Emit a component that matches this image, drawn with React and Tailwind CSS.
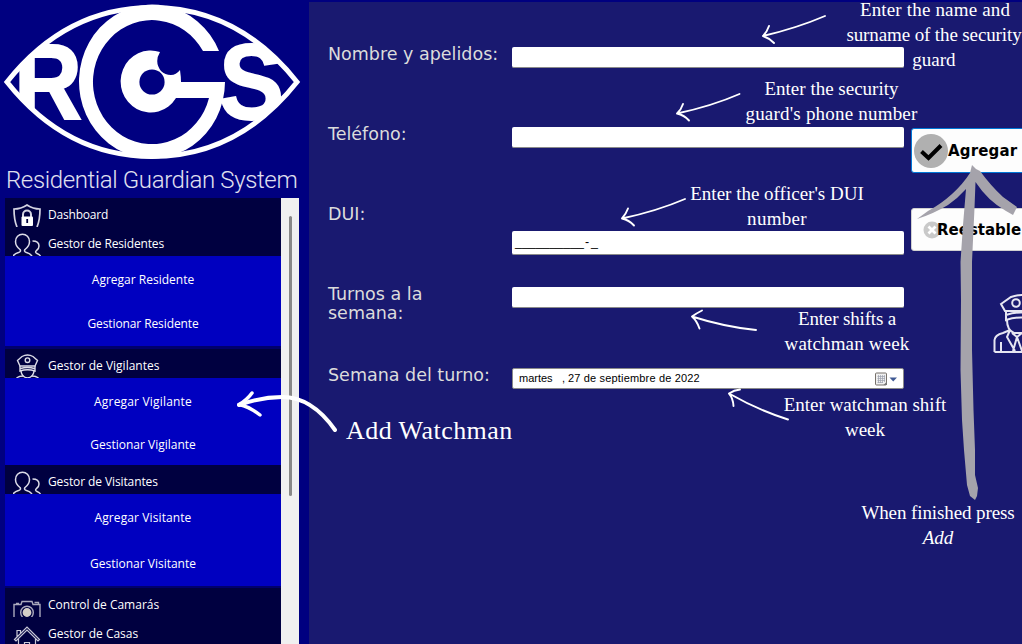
import React from 'react';

function Logo() {
  return (
    <svg className="block h-[164px] w-[308px] shrink-0" viewBox="0 0 308 164">
      <defs>
        <clipPath id="eye">
          <path d="M5 82C55 20 105 5 152 5S249 20 299 82C249 144 199 159 152 159S55 144 5 82Z" />
        </clipPath>
      </defs>
      <g clipPath="url(#eye)" stroke="#fff" strokeWidth="2" fill="#fff" fontWeight="700" fontFamily="Liberation Sans, sans-serif">
        <text x="14" y="118.500" fontSize="107" textLength="68" lengthAdjust="spacingAndGlyphs">R</text>
        <text x="219" y="119" fontSize="107" textLength="65" lengthAdjust="spacingAndGlyphs">S</text>
      </g>
      <path d="M7 82C51.500 26 103 7.500 152 7.500S252.500 26 297 82C252.500 138 201 156.500 152 156.500S51.500 138 7 82Z" fill="none" stroke="#fff" strokeWidth="5" />
      <path
        d="M219 51A73 77 0 1 0 225 82H181Q181 77 180 70Q176 75 171 75Q165 75 161 71Q154 62 160 52A30 31 0 1 0 176 98H209A59 62 0 1 1 203 51Z"
        fill="#fff"
      />
      <circle cx="152" cy="82" r="12.600" fill="#000080" />
    </svg>
  );
}

function ShieldIcon() {
  return (
    <svg className="w-7 h-[23px]" viewBox="0 0 28 23" fill="none" stroke="#d4d4e2" strokeWidth="1.700">
      <path d="M4 23Q1 16 1 5Q8 5 14 1Q20 5 27 5Q27 16 24 23" />
      <path d="M10 13V10.500a4 4 0 0 1 8 0V13" strokeWidth="2" />
      <rect x="8.500" y="12.500" width="11.500" height="9.500" rx="1" fill="#fff" stroke="none" />
      <path d="M14.200 15v4" stroke="#000040" strokeWidth="1.800" />
    </svg>
  );
}

function UsersIcon() {
  return (
    <svg className="w-7 h-[23px]" viewBox="0 0 28 23" fill="none" stroke="#dcdce8" strokeWidth="1.500">
      <path d="M0 23Q2 20.500 5.500 19.500Q8.500 18.500 7 16.500Q2.500 13 2.500 8.500A7 7.300 0 0 1 16.500 8.500Q16.500 13 12 16.500Q10.500 18.500 13.500 19.500Q17 20.500 19 23" />
      <path d="M19.500 8Q26 8 26 13Q26 16 23.500 17.500Q21.500 19.500 24 20.500Q26.500 21.500 27.500 23" />
    </svg>
  );
}

function OfficerIcon() {
  return (
    <svg className="w-7 h-6" viewBox="0 0 28 24" fill="none" stroke="#dcdce8" strokeWidth="1.400">
      <path d="M4.500 6.500L9 2.500Q14.500 -.5 20 2.500L24.500 6.500L22 12H7Z" />
      <path d="M7 12V17Q14.500 14.500 22 17V12M7.500 14.500Q14.500 12.500 21.500 14.500" />
      <circle cx="14.500" cy="6.200" r="2.300" />
      <path d="M8 17Q8.500 23 14.500 24Q20.500 23 21 17" />
      <path d="M3.500 24Q6 22 10.500 22M25.500 24Q23 22 18.500 22" />
    </svg>
  );
}

function CameraIcon() {
  return (
    <svg className="w-7 h-[17px]" viewBox="0 0 28 17" fill="none" stroke="#aaa9bd" strokeWidth="1.400">
      <path d="M1 17V4.500H8L9 1.500H19L20 4.500H27V17M3 3.500H6M21.500 2.500H25.500V4" />
      <path d="M9.500 17A6.300 6.300 0 1 1 18.500 17" />
      <circle cx="14" cy="12.500" r="3.700" fill="#d5d0c8" stroke="#d5d0c8" />
    </svg>
  );
}

function HouseIcon() {
  return (
    <svg className="w-7 h-[18px]" viewBox="0 0 28 18" fill="none" stroke="#c9c9d8" strokeWidth="1.200">
      <path d="M1.500 13.500L14 1L26.500 13.500L25 15L14 4L3 15ZM4 11V4.500H7.500V7.500M5.500 13V18M22.500 13V18M11.500 18V16.500H16.500V18" />
    </svg>
  );
}

function MenuRow({ icon, label, className, iconPad }) {
  return (
    <div className={`flex items-start overflow-hidden bg-[#000040] pl-2 ${className}`}>
      <div className={`w-[35px] shrink-0 ${iconPad}`}>{icon}</div>
      <div className="pt-[9px] leading-4">{label}</div>
    </div>
  );
}

function Submenu({ children, className }) {
  return <div className={`flex flex-col items-center bg-[#0000c0] leading-4 ${className}`}>{children}</div>;
}

function Sidebar() {
  return (
    <aside className="flex w-[309px] shrink-0 flex-col bg-[#000080]">
      <Logo />
      <div className="h-[34px] shrink-0 whitespace-nowrap pl-[6px] pt-[1px] font-['Roboto',sans-serif] text-[24px] font-light leading-[30px] tracking-[-0.38px] text-[#e0e0f0]">
        Residential Guardian System
      </div>
      <div className="flex flex-1 pl-[5px]">
        <nav className="w-[276px] font-['Open_Sans',sans-serif] text-[12px] text-white">
          <MenuRow label={<span className="tracking-[-0.2px]">Dashboard</span>} icon={<ShieldIcon />} className="h-[29px]" iconPad="pt-[6px]" />
          <MenuRow label={<span className="tracking-[-0.15px]">Gestor de Residentes</span>} icon={<UsersIcon />} className="h-[29px]" iconPad="pt-[6px]" />
          <Submenu className="h-[90px] gap-7 pt-4">
            <span>Agregar Residente</span>
            <span className="tracking-[-0.1px]">Gestionar Residente</span>
          </Submenu>
          <div className="h-[3px] bg-[#00006c]" />
          <MenuRow label="Gestor de Vigilantes" icon={<OfficerIcon />} className="h-[29px]" iconPad="pt-[5px]" />
          <Submenu className="h-[87px] gap-[27px] pt-4">
            <span className="tracking-[0.18px]">Agregar Vigilante</span>
            <span>Gestionar Vigilante</span>
          </Submenu>
          <MenuRow label={<span className="tracking-[-0.1px]">Gestor de Visitantes</span>} icon={<UsersIcon />} className="h-[29px]" iconPad="pt-[6px]" />
          <Submenu className="h-[92px] gap-[30px] pt-4">
            <span className="tracking-[0.1px]">Agregar Visitante</span>
            <span>Gestionar Visitante</span>
          </Submenu>
          <div className="h-[2px] bg-[#00006c]" />
          <MenuRow label="Control de Camarás" icon={<CameraIcon />} className="h-[29px]" iconPad="pt-[12px]" />
          <MenuRow label="Gestor de Casas" icon={<HouseIcon />} className="h-[27px]" iconPad="pt-[9px]" />
        </nav>
        <div className="w-[18px] bg-[#f0f0f0] pl-2 pt-[18px]">
          <div className="h-[280px] w-[3px] rounded bg-[#888]" />
        </div>
      </div>
    </aside>
  );
}

function Field({ label, className, inputClass, children }) {
  return (
    <div className={`flex items-start ${className}`}>
      <div className="w-[184px] shrink-0 whitespace-pre pt-px leading-[19px]">{label}</div>
      <div className={`w-[392px] shrink-0 rounded-[2px] border-b border-[#8a8a8a] bg-white text-black ${inputClass}`}>{children}</div>
    </div>
  );
}

function Form() {
  return (
    <form className="w-[595px] shrink-0 pl-[19px] pt-[42px] font-['DejaVu_Sans',sans-serif] text-[17.5px] text-[#dcdcdc]">
      <Field label="Nombre y apelidos:" className="h-20" inputClass="mt-[3px] h-[21px]" />
      <Field label="Teléfono:" className="h-20" inputClass="mt-[3px] h-[21px]" />
      <Field label="DUI:" className="h-20" inputClass="mt-[27px] h-[24px]">
        <div className="pl-[3px] font-['Liberation_Sans',sans-serif] text-[12.4px] leading-[22px]">
          __________<span className="pl-px pr-[2px]">-</span>_
        </div>
      </Field>
      <Field label={'Turnos a la\nsemana:'} className="h-[81px]" inputClass="mt-[3px] h-[21px]" />
      <Field label="Semana del turno:" className="h-20" inputClass="mt-[3px] h-[21px] border">
        <div className="flex h-full items-center pl-[6px] pr-[5px] font-['Liberation_Sans',sans-serif] text-[11px]">
          <span className="w-[43px]">martes</span>
          <span className="w-[6px]">,</span>
          <span className="tracking-[0.17px]">27 de septiembre de 2022</span>
          <svg className="ml-auto h-4 w-6" viewBox="0 0 24 16">
            <rect x="1.500" y="2" width="11" height="12" rx="1" fill="#f0f0f0" stroke="#77716b" />
            <path d="M3.500 5.500H11M3.500 7.500H11M3.500 9.500H11M3.500 11.500H9M4.500 4V12M6.500 4V12M8.500 4V12M10.500 4V11" stroke="#9ca0ae" strokeWidth=".7" />
            <path d="M9.500 14L13 10.500V14Z" fill="#777" />
            <path d="M15.500 6.500H23L19.200 10.500Z" fill="#405a94" />
          </svg>
        </div>
      </Field>
    </form>
  );
}

function Actions() {
  return (
    <div className="flex flex-1 flex-col overflow-hidden pl-[7px] pt-[126px] font-['DejaVu_Sans',sans-serif] text-[15px] font-bold text-black">
      <button className="flex h-[45px] w-[160px] shrink-0 items-center rounded-[3px] border border-[#0078d7] bg-[#fdfdfd] pl-[2px]">
        <svg className="h-[36px] w-[34px] shrink-0" viewBox="0 0 34 36">
          <circle cx="17" cy="18" r="17" fill="#b0b0b0" />
          <path d="M7.500 18.500L14.500 25L27 12.500" fill="none" stroke="#000" strokeWidth="4" />
        </svg>
        <span className="pt-[2px] tracking-[0.15px]">Agregar</span>
      </button>
      <button className="mt-[35px] flex h-[43px] w-[160px] shrink-0 items-center rounded-[3px] border border-[#d0d0d0] bg-[#fdfdfd] pl-[11px]">
        <svg className="h-[18px] w-[18px] shrink-0" viewBox="0 0 18 18">
          <circle cx="9" cy="9" r="8.500" fill="#c9c9c9" />
          <path d="M5.500 5.500L12.500 12.500M12.500 5.500L5.500 12.500" stroke="#fff" strokeWidth="2.800" />
        </svg>
        <span className="-ml-[4px] pt-px">Reestable</span>
      </button>
      <svg className="ml-[82px] mt-[43px] h-[60px] w-[58px] shrink-0" viewBox="0 0 58 60" fill="none" stroke="#e6e6f2" strokeWidth="2">
        <path d="M8 10L18 3Q29 -1 40 3L50 10L46 17H12Z" />
        <circle cx="23" cy="9" r="3.800" />
        <path d="M13 17V26Q28 21 43 26V17M13 21Q28 16 43 21M14 26Q14 36 21 39H35Q42 36 43 26" />
        <path d="M1.500 58V46Q2 41 10 39L17 36M1.500 58H56M8 58V48M17 36L14 43L22 57M19 39L24 43L29 39M24 43L20 57M24 43L29 57" />
      </svg>
    </div>
  );
}

function Note({ className, children }) {
  return (
    <div className={`absolute whitespace-nowrap text-center font-['Liberation_Serif',serif] text-[19px] leading-[25.3px] text-white ${className}`}>
      {children}
    </div>
  );
}

function Annotations() {
  return (
    <>
      <svg className="absolute left-0 top-0 h-[644px] w-[1022px]" viewBox="0 0 1022 644" fill="none" stroke="#fff" strokeWidth="1.900" strokeLinecap="round" strokeLinejoin="round">
        <path d="M825 16Q797 28 763 36M769 26Q767 32 763 36Q769 38 774 43" />
        <path d="M739.500 94Q712 106 677 113.500M683 104Q681 110 677 113.500Q684 115 689 120.500" />
        <path d="M685 199Q657 211 622 218.500M628 208.500Q626 214 622 218.500Q629 220 634 225.500" />
        <path d="M756 330Q725 327 692 316.500M702 310.500Q697 313 692 316.500Q697 321 699.500 328.500" />
        <path d="M788 419.500Q758 410 729 393.500M740 389.500Q734 390 729 393.500Q733 398 733.500 406" />
        <path d="M335 430Q312 397 282 397Q261 397 239 405" strokeWidth="4" />
        <path d="M252 393Q247 400 239 404.500Q250 407 260 415" strokeWidth="3.500" />
        <path
          d="M972 165L976 169L980 171Q991 186 1003 197L1017 207L1013 215L1006 211Q988 201 975.500 182L974.500 208L973 240L972 262V350L973.500 410L975 450V475L978 488L977 496L975 500L970 496L967 485L964 450L962 420L960.500 370L961 300L960.500 262L963 225L966 189Q958 198 948 205Q933 214 917 219L928 211Q941 204 952 194Q963 184 970 173Z"
          fill="#a5a3ab"
          stroke="none"
        />
      </svg>
      <Note className="left-[846px] top-0 w-[176px]">
        <div className="pb-[3px] pl-[2px] leading-[19px] tracking-[0.17px]">Enter the name and</div>
        <div className="tracking-[-0.12px]">surname of the security</div>
        <div>guard</div>
      </Note>
      <Note className="left-[745px] top-[76px] w-[173px]">
        <div>Enter the security</div>
        <div className="tracking-[0.2px]">guard's phone number</div>
      </Note>
      <Note className="left-[689px] top-[181px] w-[176px]">
        <div>Enter the officer's DUI</div>
        <div className="tracking-[0.3px]">number</div>
      </Note>
      <Note className="left-[784px] top-[306px] w-[126px]">
        <div className="tracking-[-0.15px]">Enter shifts a</div>
        <div className="tracking-[0.15px]">watchman week</div>
      </Note>
      <Note className="left-[783px] top-[392px] w-[164px]">
        <div>Enter watchman shift</div>
        <div>week</div>
      </Note>
      <Note className="left-[861px] top-[500px] w-[154px]">
        <div className="tracking-[-0.1px]">When finished press</div>
        <div className="italic">Add</div>
      </Note>
      <div className="absolute left-[346px] top-[415px] whitespace-nowrap font-['Liberation_Serif',serif] text-[26px] leading-8 tracking-[0.45px] text-white">
        Add Watchman
      </div>
    </>
  );
}

export default function App() {
  return (
    <div className="relative flex h-[644px] w-[1022px] overflow-hidden bg-[#000080]">
      <Sidebar />
      <main className="mt-[2px] flex min-w-0 flex-1 bg-[#191970]">
        <Form />
        <Actions />
      </main>
      <Annotations />
    </div>
  );
}
